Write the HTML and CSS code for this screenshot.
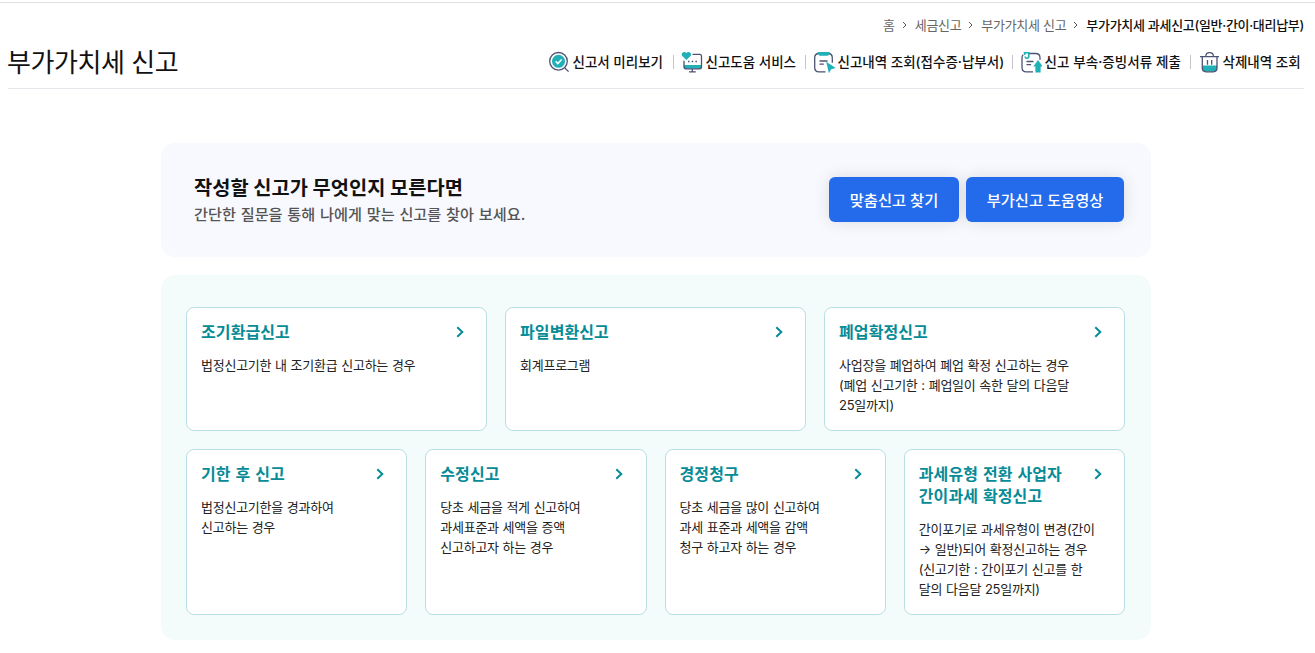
FILE: index.html
```html
<!DOCTYPE html>
<html lang="ko">
<head>
<meta charset="utf-8">
<title>부가가치세 신고</title>
<link rel="stylesheet" href="styles.css">
</head>
<body>
<header class="page-header">
  <nav class="breadcrumb">
    <span>홈</span>
    <svg class="crumb-arrow" viewBox="0 0 5 8"><path d="M1 1l3 3-3 3"/></svg>
    <span>세금신고</span>
    <svg class="crumb-arrow" viewBox="0 0 5 8"><path d="M1 1l3 3-3 3"/></svg>
    <span>부가가치세 신고</span>
    <svg class="crumb-arrow" viewBox="0 0 5 8"><path d="M1 1l3 3-3 3"/></svg>
    <strong class="current">부가가치세 과세신고(일반·간이·대리납부)</strong>
  </nav>
  <div class="title-row">
    <h1 class="page-title">부가가치세 신고</h1>
    <div class="tools">
      <a class="tool">
        <svg class="tool-icon" viewBox="0 0 22 22">
          <circle class="line" cx="10.5" cy="10.3" r="8.8"/>
          <path class="line" d="M16.8 17l3.8 3.6"/>
          <circle class="teal" cx="10.5" cy="10.3" r="6.5"/>
          <path class="check" d="M7.6 10.3l2.2 2.2 3.8-4"/>
        </svg>신고서 미리보기</a>
      <a class="tool">
        <svg class="tool-icon" viewBox="0 0 22 22">
          <path class="teal" d="M3 14h17.5v3.6H3z"/>
          <path class="line" d="M11.5 3.4h7.2q1.8 0 1.8 1.8v10.6q0 2-2 2H5q-2 0-2-2V9.8M11.3 18v2.8M8 20.9h6.8"/>
          <path class="teal" d="M5.400 9L1.300 5.100C-.8 2.500 3.300-.8 5.400 2.100 7.500-.8 11.600 2.500 9.500 5.100z"/>
          <path class="dots" d="M7 10.600h1.500M10.700 10.600h1.500M14.400 10.600h1.500"/>
        </svg>신고도움 서비스</a>
      <a class="tool">
        <svg class="tool-icon" viewBox="0 0 22 22">
          <path class="line" d="M12.500 20.800H6q-4.300 0-4.300-4.300V6.800q0-4.300 4.300-4.300h9q4.300 0 4.300 4.300v5"/>
          <path class="teal" d="M4.600 1h12.200l-.8 2.400q-.4 1.400-1.800 1.400H7.200q-1.400 0-1.800-1.400z"/>
          <path class="line" d="M6.500 10h8M6.500 13.200h4.300"/>
          <path class="teal" d="M13.200 10.800l9.600 6.200-4.600 1.200-2.300 4z"/>
        </svg>신고내역 조회(접수증·납부서)</a>
      <a class="tool tool-attach">
        <svg class="tool-icon" viewBox="0 0 22 22">
          <path class="line" d="M9 2.500h6.700q4.300 0 4.300 4.300v2M13 20.800H6.300Q2 20.800 2 16.500V6.500q0-1.600 1.200-2.700"/>
          <path class="clip" d="M4.600 4V1.800h4.200v3.500q0 1.900-1.900 1.900-1.700 0-1.700-1.700"/>
          <path class="line" d="M6.500 10.500h7M6.500 13.600h4.600"/>
          <path class="teal" d="M18 9l4.700 6.400h-2.100v6.100h-5.200v-6.100h-2.100z"/>
        </svg>신고 부속·증빙서류 제출</a>
      <a class="tool">
        <svg class="tool-icon" viewBox="0 0 22 22">
          <path class="teal" d="M4.500 14.500h14.500v3q0 3-3 3H7.500q-3 0-3-3z"/>
          <path class="line" d="M2 5.600h19M4.300 5.600v11.500q0 3.700 3.700 3.700h7.300q3.700 0 3.700-3.700V5.600M7.800 5.400q0-3.800 3.800-3.800t3.800 3.800M9.500 9v4.800M13.700 9v4.800"/>
        </svg>삭제내역 조회</a>
    </div>
  </div>
</header>

<main class="content">
  <section class="banner">
    <div class="banner-copy">
      <h2 class="banner-title">작성할 신고가 무엇인지 모른다면</h2>
      <p class="banner-text">간단한 질문을 통해 나에게 맞는 신고를 찾아 보세요.</p>
    </div>
    <div class="banner-actions">
      <button class="btn btn-find">맞춤신고 찾기</button>
      <button class="btn btn-video">부가신고 도움영상</button>
    </div>
  </section>

  <section class="panel">
    <div class="cards cards-three">
      <a class="card">
        <div class="card-head"><h3 class="card-title">조기환급신고</h3><svg class="chevron" viewBox="0 0 8 12"><path d="M1.300 1.300L6.300 6l-5 4.700"/></svg></div>
        <p class="card-text">법정신고기한 내 조기환급 신고하는 경우</p>
      </a>
      <a class="card">
        <div class="card-head"><h3 class="card-title">파일변환신고</h3><svg class="chevron" viewBox="0 0 8 12"><path d="M1.300 1.300L6.300 6l-5 4.700"/></svg></div>
        <p class="card-text">회계프로그램</p>
      </a>
      <a class="card">
        <div class="card-head"><h3 class="card-title">폐업확정신고</h3><svg class="chevron" viewBox="0 0 8 12"><path d="M1.300 1.300L6.300 6l-5 4.700"/></svg></div>
        <p class="card-text">사업장을 폐업하여 폐업 확정 신고하는 경우<br>(폐업 신고기한 : 폐업일이 속한 달의 다음달<br>25일까지)</p>
      </a>
    </div>
    <div class="cards cards-four">
      <a class="card">
        <div class="card-head"><h3 class="card-title">기한 후 신고</h3><svg class="chevron" viewBox="0 0 8 12"><path d="M1.300 1.300L6.300 6l-5 4.700"/></svg></div>
        <p class="card-text">법정신고기한을 경과하여<br>신고하는 경우</p>
      </a>
      <a class="card">
        <div class="card-head"><h3 class="card-title">수정신고</h3><svg class="chevron" viewBox="0 0 8 12"><path d="M1.300 1.300L6.300 6l-5 4.700"/></svg></div>
        <p class="card-text">당초 세금을 적게 신고하여<br>과세표준과 세액을 증액<br>신고하고자 하는 경우</p>
      </a>
      <a class="card">
        <div class="card-head"><h3 class="card-title">경정청구</h3><svg class="chevron" viewBox="0 0 8 12"><path d="M1.300 1.300L6.300 6l-5 4.700"/></svg></div>
        <p class="card-text">당초 세금을 많이 신고하여<br>과세 표준과 세액을 감액<br>청구 하고자 하는 경우</p>
      </a>
      <a class="card">
        <div class="card-head"><h3 class="card-title">과세유형 전환 사업자<br>간이과세 확정신고</h3><svg class="chevron" viewBox="0 0 8 12"><path d="M1.300 1.300L6.300 6l-5 4.700"/></svg></div>
        <p class="card-text">간이포기로 과세유형이 변경(간이<br>→ 일반)되어 확정신고하는 경우<br>(신고기한 : 간이포기 신고를 한<br>달의 다음달 25일까지)</p>
      </a>
    </div>
  </section>
</main>
</body>
</html>
```
FILE: styles.css
```css
* { box-sizing: border-box; }

body {
  margin: 0;
  padding-top: 2px;
  background: #fff;
  color: #111;
  font-family: Inter, "Noto Sans CJK KR", sans-serif;
  font-size: 13px;
  white-space: nowrap;
}

h1, h2, h3, p { margin: 0; }

.page-header {
  border-top: 1px solid #e0e0e0;
  padding: 12px 11px 0 8px;
}

.breadcrumb {
  display: flex;
  justify-content: flex-end;
  align-items: center;
  height: 20px;
  line-height: 20px;
  letter-spacing: -0.3px;
  color: #666;
}

.crumb-arrow {
  width: 5px;
  height: 8px;
  margin: 0 8px 0 7px;
  fill: none;
  stroke: #555;
}

.current { color: #111; font-weight: 500; }

.title-row {
  display: flex;
  justify-content: space-between;
  height: 54px;
  border-bottom: 1px solid #e4e7ec;
}

.page-title {
  margin-left: -1px;
  padding-top: 10px;
  font-size: 26px;
  font-weight: 400;
  line-height: 36px;
  letter-spacing: -0.45px;
}

.tools {
  display: grid;
  grid-template-columns: 125px 132px 207px 178px 114px;
  height: 22px;
  margin-top: 16px;
  line-height: 22px;
  font-size: 13.5px;
  font-weight: 500;
}

.tool { display: flex; align-items: center; }
.tool-attach { letter-spacing: 0.07px; }

.tool + .tool::before {
  content: "";
  width: 1px;
  height: 14px;
  margin-right: 7px;
  background: #c6c6c6;
}

.tool-icon {
  flex: none;
  width: 22px;
  height: 22px;
  margin-right: 2.5px;
}

.line { fill: none; stroke: #4d5272; stroke-width: 1.3; }
.teal { fill: #1fb0b8; }
.check { fill: none; stroke: #fff; stroke-width: 1.6; }
.dots { fill: none; stroke: #4d5272; stroke-width: 1.5; }
.clip { fill: none; stroke: #1fb0b8; stroke-width: 1.6; }

.content {
  width: 990px;
  margin: 54px 0 0 161px;
}

.banner {
  display: flex;
  justify-content: space-between;
  height: 114px;
  padding: 0 27px 0 33px;
  border-radius: 14px;
  background: #f8f9fe;
}

.banner-copy { padding-top: 31px; }

.banner-title {
  font-size: 19.8px;
  font-weight: 700;
  line-height: 28px;
}

.banner-text {
  color: #555;
  font-size: 15.2px;
  font-weight: 500;
  line-height: 26px;
  word-spacing: 0.7px;
}

.banner-actions { display: flex; gap: 7px; padding-top: 34px; }

.btn {
  height: 45px;
  padding: 0 0 2px;
  border: 0;
  border-radius: 6px;
  background: #246beb;
  color: #fff;
  font-family: inherit;
  font-size: 15.3px;
  font-weight: 500;
  box-shadow: 0 0 16px rgba(0, 0, 0, 0.12);
}

.btn-find { width: 130px; }
.btn-video { width: 158px; }

.panel {
  height: 365px;
  margin-top: 18px;
  padding: 32px 26px 0 25px;
  border-radius: 14px;
  background: #f3fcfb;
}

.cards { display: grid; gap: 18px; }
.cards-three { grid-template-columns: repeat(3, 1fr); height: 124px; }
.cards-four { grid-template-columns: repeat(4, 1fr); height: 166px; margin-top: 18px; }

.card {
  padding: 13px 22.5px 0 14px;
  border: 1px solid #b9dfe4;
  border-radius: 8px;
  background: #fff;
}

.card-head { display: flex; justify-content: space-between; }

.card-title {
  color: #078b97;
  font-size: 16px;
  font-weight: 700;
  line-height: 22px;
  letter-spacing: 0.1px;
  word-spacing: 1px;
}

.chevron {
  flex: none;
  width: 8px;
  height: 12px;
  margin-top: 4.5px;
  fill: none;
  stroke: #078b97;
  stroke-width: 2;
}

.card-text {
  margin-top: 11.6px;
  color: #222;
  font-size: 13px;
  line-height: 20.15px;
  letter-spacing: -0.25px;
  word-spacing: 0.4px;
}
```
